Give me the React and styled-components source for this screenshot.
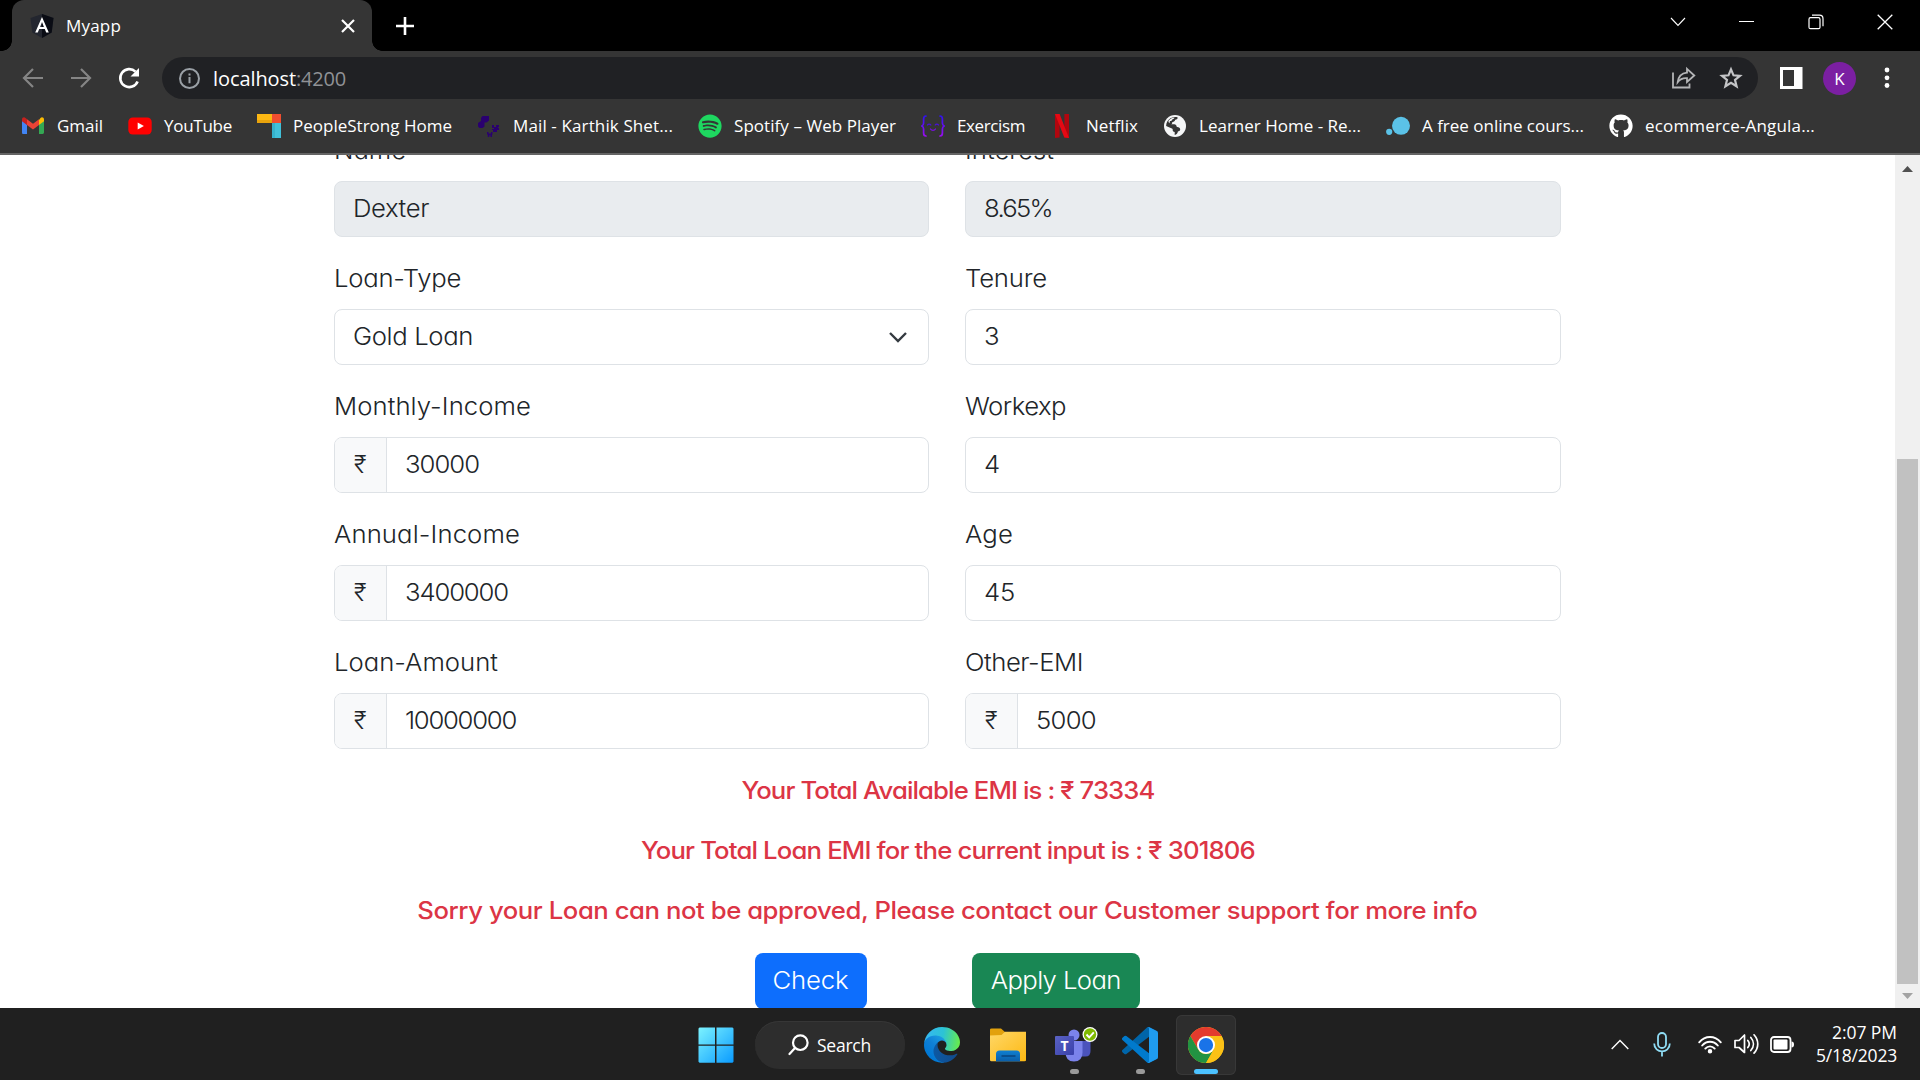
import React, { useLayoutEffect, useRef } from "react";
import styled, { createGlobalStyle } from "styled-components";
import { FaGithub, FaSpotify } from "react-icons/fa";

const GlobalStyle = createGlobalStyle`
  * { box-sizing: border-box; }
  html, body { margin: 0; padding: 0; background: #fff; overflow: hidden; }
  svg { display: block; flex: none; }
`;

const uiFont = `"Open Sans", "Noto Sans", sans-serif`;
const pageFont = `Inter, "Open Sans", "Noto Sans", sans-serif`;

const Desktop = styled.div`
  width: 1920px;
  height: 1080px;
  display: flex;
  flex-direction: column;
  overflow: hidden;
  font-family: ${uiFont};
`;

/* ---------- text tracked to a measure ---------- */

const Tracked = styled.span`
  display: inline-block;
  white-space: pre;
  transform: ${(p) => (p.$stretch === 1 ? "none" : `scaleX(${p.$stretch})`)};
  transform-origin: ${(p) => p.$origin} center;
`;

function Fit({ width, stretch = 1, origin = "left", children }) {
  const ref = useRef(null);
  useLayoutEffect(() => {
    const el = ref.current;
    el.style.letterSpacing = "0px";
    const natural = el.getBoundingClientRect().width;
    const count = el.textContent.length;
    el.style.letterSpacing = `${(width - natural) / stretch / count}px`;
  }, [width, stretch, children]);
  return <Tracked ref={ref} $stretch={stretch} $origin={origin}>{children}</Tracked>;
}

const WIDE = 1.07;

/* ---------- browser chrome ---------- */

const TabStrip = styled.header`
  height: 51px;
  flex: none;
  display: flex;
  background: #000;
  padding-left: 12px;
`;

const Tab = styled.div`
  position: relative;
  width: 360px;
  height: 51px;
  display: flex;
  align-items: center;
  padding: 0 17px 0 18px;
  background: #353535;
  border-radius: 12px 12px 0 0;
  color: #fff;
  font-size: 17px;
  &::before, &::after {
    content: "";
    position: absolute;
    bottom: 0;
    width: 10px;
    height: 10px;
  }
  &::before { left: -10px; background: radial-gradient(circle at 0 0, #000 9.5px, #353535 10px); }
  &::after { right: -10px; background: radial-gradient(circle at 100% 0, #000 9.5px, #353535 10px); }
`;

const TabTitle = styled.div`
  flex: 1;
  padding-left: 12px;
  line-height: 26px;
`;

const NewTab = styled.div`
  display: flex;
  align-items: center;
  margin-left: 24px;
`;

const WindowControls = styled.div`
  margin-left: auto;
  margin-right: 1px;
  display: flex;
  height: 43px;
`;

const WindowButton = styled.div`
  width: 69px;
  display: flex;
  align-items: center;
  justify-content: center;
`;

const Toolbar = styled.div`
  height: 54px;
  flex: none;
  display: flex;
  align-items: center;
  background: #353535;
  padding: 0 20px 0 21px;
`;

const NavGroup = styled.div`
  width: 141px;
  display: flex;
  gap: 24px;
`;

const AddressBar = styled.div`
  width: 1596px;
  height: 42px;
  display: flex;
  align-items: center;
  border-radius: 21px;
  background: #202124;
  padding: 0 15px 0 16px;
  font-size: 20px;
`;

const Url = styled.div`
  flex: 1;
  padding-left: 12px;
  line-height: 29px;
`;

const Host = styled.span`
  color: ${(p) => (p.$dim ? "#909296" : "#fff")};
`;

const AddressActions = styled.div`
  display: flex;
  gap: 23px;
`;

const ToolbarEnd = styled.div`
  flex: 1;
  display: flex;
  align-items: center;
  padding-left: 22px;
`;

const Avatar = styled.div`
  width: 33px;
  height: 33px;
  margin: 0 28px 0 20px;
  border-radius: 50%;
  background: #7b1fa2;
  color: #fff;
  font-size: 17px;
  line-height: 33px;
  text-align: center;
`;

const Bookmarks = styled.nav`
  height: 50px;
  flex: none;
  display: flex;
  align-items: center;
  gap: 25px;
  padding: 0 0 7px 21px;
  background: #353535;
  border-bottom: 2px solid #646464;
  color: #fff;
  font-size: 17px;
`;

const Bookmark = styled.div`
  width: ${(p) => p.$width}px;
  flex: none;
  display: flex;
  align-items: center;
  gap: 12px;
  line-height: 24px;
`;

/* ---------- page ---------- */

const Viewport = styled.main`
  height: 853px;
  flex: none;
  display: flex;
  overflow: hidden;
  background: #fff;
`;

const Page = styled.div`
  width: 1895px;
  height: 853px;
  overflow: hidden;
  font-family: ${pageFont};
  font-feature-settings: "cv11" 1;
  font-weight: 260;
  font-size: 24px;
  color: #212529;
`;

const LoanForm = styled.div`
  width: 1227px;
  margin: -23px 0 0 334px;
  display: grid;
  grid-template-columns: 595px 596px;
  column-gap: 36px;
  grid-auto-rows: 128px;
`;

const Field = styled.div`
  display: flex;
  flex-direction: column;
`;

const Label = styled.label`
  height: 37px;
  line-height: 38px;
  margin-bottom: 12px;
`;

const Control = styled.div`
  height: 56px;
  display: flex;
  align-items: stretch;
  overflow: hidden;
  border: 1px solid #dee2e6;
  border-radius: 8px;
  background: ${(p) => (p.$disabled ? "#e9ecef" : "#fff")};
  line-height: 54px;
`;

const Prefix = styled.div`
  width: 52px;
  padding-left: 19px;
  background: #f8f9fa;
  border-right: 1px solid #dee2e6;
`;

const Value = styled.div`
  flex: 1;
  padding-left: 18px;
`;

const Caret = styled.div`
  display: flex;
  align-items: center;
  padding-right: 20px;
`;

const Messages = styled.div`
  display: flex;
  flex-direction: column;
  align-items: center;
  padding-bottom: 1px;
  color: #dc3545;
  font-weight: 450;
`;

const Message = styled.p`
  margin: 0 0 23px;
  height: 37px;
  line-height: 38px;
`;

const Actions = styled.div`
  display: flex;
  justify-content: center;
  gap: 105px;
  font-weight: 300;
`;

const Button = styled.button`
  width: ${(p) => p.$width}px;
  height: 56px;
  padding: 0;
  border: 0;
  border-radius: 8px;
  background: ${(p) => p.$color};
  color: #fff;
  font: inherit;
  font-feature-settings: inherit;
  line-height: 54px;
`;

const Scrollbar = styled.div`
  width: 25px;
  display: flex;
  flex-direction: column;
  align-items: center;
  justify-content: space-between;
  background: #f0f0f0;
`;

const ScrollArrow = styled.div`
  height: 24px;
  display: flex;
  align-items: center;
  padding-top: ${(p) => (p.$top ? 3 : 0)}px;
`;

const ScrollThumb = styled.div`
  width: 21px;
  height: 525px;
  margin-top: auto;
  background: #c1c1c1;
`;

/* ---------- taskbar ---------- */

const Taskbar = styled.footer`
  height: 72px;
  flex: none;
  display: flex;
  background: #202020;
  color: #fff;
  padding-left: 683px;
`;

const Slot = styled.div`
  position: relative;
  width: 60px;
  height: 60px;
  margin: 7px 3px 0;
  display: flex;
  align-items: center;
  justify-content: center;
  border-radius: 6px;
  background: ${(p) => (p.$active ? "#2d2d2d" : "transparent")};
  box-shadow: ${(p) => (p.$active ? "inset 0 0 0 1px #383838" : "none")};
  &::after {
    content: "";
    position: absolute;
    bottom: 1px;
    width: ${(p) => (p.$active ? 24 : 9)}px;
    height: 5px;
    border-radius: 3px;
    background: ${(p) => (p.$active ? "#4cc2ff" : p.$open ? "#9a9a9a" : "transparent")};
  }
`;

const SearchPill = styled.div`
  width: 150px;
  height: 48px;
  margin: 13px 4px 0 6px;
  display: flex;
  align-items: center;
  padding: 0 0 0 33px;
  gap: 8px;
  border-radius: 24px;
  background: #2d2d2d;
  box-shadow: inset 0 1px 0 #363636;
  font-size: 17.5px;
  line-height: 24px;
`;

const Tray = styled.div`
  width: 309px;
  margin-left: auto;
  display: flex;
  align-items: center;
  padding: 0 23px 0 0;
`;

const TrayIcon = styled.div`
  margin-right: ${(p) => p.$after}px;
`;

const Clock = styled.div`
  flex: 1;
  display: flex;
  flex-direction: column;
  align-items: flex-end;
  font-size: 17.5px;
  line-height: 23px;
`;

/* ---------- icons ---------- */

const AngularIcon = () => (
  <svg width="24" height="24" viewBox="0 0 24 24">
    <path d="M12 0L.5 4l1.8 14.5L12 24l9.7-5.5L23.5 4z" fill="#23262f" />
    <path d="M12 0v24l9.7-5.5L23.5 4z" fill="#0a0c14" />
    <path d="M12 3L5.2 18.5h2.6l1.4-3.4h5.6l1.4 3.4h2.6zm0 5.1l1.9 4.9h-3.8z" fill="#fff" />
  </svg>
);

const GmailIcon = () => (
  <svg width="24" height="24" viewBox="0 0 24 24">
    <path d="M1 6.5v12.2c0 .8.6 1.4 1.4 1.4H6v-9.3L3.5 6z" fill="#4285f4" />
    <path d="M18 20h3.6c.8 0 1.4-.6 1.4-1.4V6.5L20.500 6 18 10.800z" fill="#34a853" />
    <path d="M18 6v4.900l5-3.700V5.500c0-2-2.200-2.800-3.500-1.500z" fill="#fbbc04" />
    <path d="M6 10.900V5.300l6 4.500 6-4.500v5.600l-6 4.500z" fill="#ea4335" />
    <path d="M1 5.500v1.700l5 3.700V5.300L4.500 4C3.200 2.700 1 3.500 1 5.500z" fill="#c5221f" />
  </svg>
);

const YouTubeIcon = () => (
  <svg width="24" height="24" viewBox="0 0 24 24">
    <rect x="0.300" y="3.500" width="23.400" height="17" rx="4.500" fill="#f00" />
    <path d="M9.700 8.500v7l6.200-3.500z" fill="#fff" />
  </svg>
);

const PeopleStrongIcon = () => (
  <svg width="24" height="24" viewBox="0 0 24 24">
    <path d="M0 0h15v9H0z" fill="#fdb813" />
    <path d="M0 6h15v3H0z" fill="#e9a30c" />
    <path d="M15 0h9v9h-9z" fill="#f04e30" />
    <path d="M15 9h9v15h-9z" fill="#41c0d9" />
    <path d="M15 9h3v15h-3z" fill="#35b2cc" />
  </svg>
);

const MailIcon = () => (
  <svg width="24" height="24" viewBox="0 0 24 24" fill="#2a0070">
    <path d="M5.500 2H12v4.500L9.500 8.500H7.500v4l-2 1.500H2.500L1 12.500V9l3-2V4z" />
    <path d="M15 11h2v2h2v-2h3v2h-1v1h1v2h-2v2h-4v-2h-1v-1h2v-1h-2z" />
    <path d="M10 18h1.500v1.500H14V18h1.500v2.500H15V23h-1.500v-1.800H12.300V23H10.800v-2.500H10z" />
  </svg>
);

const ExercismIcon = () => (
  <svg width="24" height="24" viewBox="0 0 24 24" fill="none" strokeLinecap="round" strokeWidth="1.700">
    <defs>
      <linearGradient id="ex" x1="0" y1="0" x2="0" y2="1">
        <stop offset="0" stopColor="#2f12f0" />
        <stop offset="1" stopColor="#9a0df0" />
      </linearGradient>
    </defs>
    <path d="M5 2C3 2 2.600 3 2.600 5v4c0 1.800-.6 2.500-1.800 3 1.200.5 1.800 1.200 1.800 3v4c0 2 .4 3 2.400 3" stroke="url(#ex)" />
    <path d="M19 2c2 0 2.400 1 2.400 3v4c0 1.800.6 2.500 1.800 3-1.200.5-1.800 1.200-1.800 3v4c0 2-.4 3-2.400 3" stroke="url(#ex)" />
    <path d="M6.500 11c.8-1.300 2.500-1.300 3.300 0M14.200 11c.8-1.300 2.500-1.300 3.300 0" stroke="#4a10d8" strokeWidth="1.300" />
    <path d="M9.500 15c1.200 1.900 3.800 1.900 5 0" stroke="#7a0fe0" strokeWidth="1.300" />
  </svg>
);

const NetflixIcon = () => (
  <svg width="24" height="24" viewBox="0 0 24 24">
    <path d="M5 0h4.600v23.600L5 24z" fill="#b1060f" />
    <path d="M14.400 0H19v24l-4.600-.5z" fill="#b1060f" />
    <path d="M5 0h4.600L19 24l-4.700-.6z" fill="#e50914" />
  </svg>
);

const GlobeIcon = () => (
  <svg width="24" height="24" viewBox="0 0 24 24">
    <circle cx="12" cy="12" r="11" fill="#f5f6f7" />
    <path
      d="M14.500 3.200c.6 1.600-.8 2.400-2.300 2.500-.5 1.900-1.900 2.200-3 2.300.3 1.300-.2 2-1.200 2.200l3.200.1c1.800.1 2.500 1.500 2.600 2.700 1.800-.2 3.500.8 3.400 2.600-.2 1.600-1.500 1.900-2.300 2-.3 1.700-1.200 3-3.200 3.500v-3c-1.500-.1-2.100-1-2-2.300.1-1-.4-1.400-1.400-1.600L3.100 12c0-3.500 2-6.400 4.700-7.900 1.900-1 4.500-1.500 6.700-.9z"
      fill="#353535"
    />
    <path d="M5.500 6.800c1.500-2 3.600-3 6-3.200-.2 1.200-1 1.500-2 1.600-.4 1.400-1.500 1.800-2.500 1.900-.3.900-.2 1.400-.6 2.200-.6-.8-1.200-1.500-.9-2.500z" fill="#f5f6f7" />
  </svg>
);

const DotsIcon = () => (
  <svg width="24" height="24" viewBox="0 0 24 24" fill="#5bc2e7">
    <circle cx="15" cy="11.800" r="9" />
    <circle cx="3.200" cy="17.800" r="3.100" />
  </svg>
);

const BackIcon = ({ flip }) => (
  <svg width="24" height="24" viewBox="0 0 24 24" fill="none" stroke="#858585" strokeWidth="2.200">
    <path d={flip ? "M2 12h18.500M12 3l9 9-9 9" : "M22 12H3.500M12 3l-9 9 9 9"} />
  </svg>
);

const ReloadIcon = () => (
  <svg width="24" height="24" viewBox="0 0 24 24">
    <path d="M20.600 15.500A9 9 0 1 1 18.500 5.600" fill="none" stroke="#fff" strokeWidth="2.600" />
    <path d="M22 2v8.500h-8.500z" fill="#fff" />
  </svg>
);

const InfoIcon = () => (
  <svg width="23" height="23" viewBox="0 0 24 24" fill="none" stroke="#9aa0a6" strokeWidth="2.100">
    <circle cx="12" cy="12" r="9.900" />
    <path d="M12 10.500v6.500M12 6.700v2.200" />
  </svg>
);

const ShareIcon = () => (
  <svg width="25" height="24" viewBox="0 0 25 24" fill="none" stroke="#b4b5b7" strokeWidth="1.800">
    <path d="M2 6.500V21.500h16.500v-4" />
    <path d="M16 2.800l7.300 6.700-7.300 6.500v-3.800c-4-.3-7 1-9.300 4 .6-5.200 3.800-8.900 9.300-9.500z" />
  </svg>
);

const StarIcon = () => (
  <svg width="24" height="24" viewBox="0 0 24 24" fill="none" stroke="#c4c5c7" strokeWidth="2.200">
    <path d="M12 3.300l2.500 6 6.500.5-5 4.200 1.600 6.300-5.600-3.400-5.600 3.400L8 14 3 9.800l6.500-.5z" />
  </svg>
);

const SidePanelIcon = () => (
  <svg width="23" height="22" viewBox="0 0 23 22">
    <path d="M0 0h22.500v22H0zM3 3v16h11V3z" fill="#fff" fillRule="evenodd" />
  </svg>
);

const MenuIcon = () => (
  <svg width="6" height="22" viewBox="0 0 6 22" fill="#fff">
    <circle cx="3" cy="3" r="2.400" />
    <circle cx="3" cy="10.800" r="2.400" />
    <circle cx="3" cy="18.500" r="2.400" />
  </svg>
);

const WindowsIcon = () => (
  <svg width="36" height="36" viewBox="0 0 36 36">
    <defs>
      <linearGradient id="win" x1="0" y1="0" x2="1" y2="1">
        <stop offset="0" stopColor="#7cf3ff" />
        <stop offset="1" stopColor="#0a9bff" />
      </linearGradient>
    </defs>
    <path d="M1.500 .5H17v17H.5v-16zM18.500 .5H34.500l1 1v16h-17zM.5 18.700H17v17H1.500l-1-1zM18.500 18.700h17v16l-1 1h-16z" fill="url(#win)" />
  </svg>
);

const SearchIcon = () => (
  <svg width="21" height="22" viewBox="0 0 21 22" fill="none" stroke="#fff" strokeWidth="2.200" strokeLinecap="round">
    <circle cx="12.300" cy="8.700" r="7.300" />
    <path d="M7 14L1.500 20" />
  </svg>
);

const EdgeIcon = () => (
  <svg width="36" height="36" viewBox="0 0 256 256">
    <defs>
      <linearGradient id="e1" x1="63" y1="177" x2="242" y2="177" gradientUnits="userSpaceOnUse">
        <stop offset="0" stopColor="#0c59a4" />
        <stop offset="1" stopColor="#114a8b" />
      </linearGradient>
      <linearGradient id="e2" x1="157" y1="95" x2="46" y2="215" gradientUnits="userSpaceOnUse">
        <stop offset="0" stopColor="#1b9de2" />
        <stop offset=".5" stopColor="#0f80d7" />
        <stop offset="1" stopColor="#0078d4" />
      </linearGradient>
      <linearGradient id="e3" x1="10" y1="70" x2="250" y2="110" gradientUnits="userSpaceOnUse">
        <stop offset="0" stopColor="#35b8f1" />
        <stop offset=".5" stopColor="#2cc3d5" />
        <stop offset="1" stopColor="#66eb4e" />
      </linearGradient>
    </defs>
    <path d="M231 190.500c-3.400 1.800-6.900 3.400-10.500 4.700a102 102 0 0 1-35.900 6.500c-47.300 0-88.500-32.500-88.500-74.300 0-11.400 6.500-21.900 16.500-27.300-42.800 1.800-53.800 46.400-53.800 72.500 0 74 68.100 81.400 82.800 81.400 7.900 0 19.800-2.300 27-4.600l1.300-.4a128 128 0 0 0 66.600-52.800 4 4 0 0 0-5.500-5.700z" fill="url(#e1)" />
    <path d="M105.700 241.400a79 79 0 0 1-22.700-21.300 80.700 80.700 0 0 1 29.500-120c3.200-1.500 8.500-4.100 15.600-4a32 32 0 0 1 25.700 13 32 32 0 0 1 6.300 18.700c0-.2 24.500-79.600-80-79.600-43.900 0-80 41.700-80 78.200 0 19.300 4 36.700 12 54a128 128 0 0 0 156.400 67 75 75 0 0 1-62.800-6z" fill="url(#e2)" />
    <path d="M152.300 148.900c-.9 1-3.400 2.500-3.400 5.600 0 2.600 1.700 5.200 4.800 7.300 14.300 10 41.400 8.600 41.500 8.600a59.600 59.600 0 0 0 30.300-8.300 61.400 61.400 0 0 0 30.400-52.900c.3-22.400-8-37.300-11.300-43.900C223.500 23.900 177.700 0 128 0A128 128 0 0 0 0 126.200c.5-36.500 36.800-66 80-66 3.500 0 23.500.3 42 10a73 73 0 0 1 30.900 29.400c6.100 10.600 7.200 24.100 7.200 29.500s-2.700 13.300-7.800 19.800z" fill="url(#e3)" />
  </svg>
);

const FolderIcon = () => (
  <svg width="36" height="34" viewBox="0 0 36 34">
    <defs>
      <linearGradient id="fo" x1="0" y1="0" x2="1" y2="1">
        <stop offset="0" stopColor="#ffd767" />
        <stop offset="1" stopColor="#fdb913" />
      </linearGradient>
      <linearGradient id="fb" x1="0" y1="0" x2="0" y2="1">
        <stop offset="0" stopColor="#0f80d2" />
        <stop offset="1" stopColor="#0b5ea8" />
      </linearGradient>
    </defs>
    <path d="M0 1.500Q0 .5 1.500 .5h9.500l4 3.500h4v6H0z" fill="#e2a10d" />
    <path d="M0 7.500L11.500 7l3.500-3.300h21v28.500q0 1-1.500 1h-33Q0 33.200 0 32z" fill="url(#fo)" />
    <path d="M6 33.500V26q0-3.500 3.500-3.500h17Q30 22.500 30 26v7.500z" fill="url(#fb)" />
    <path d="M11.500 28h14" stroke="#08457e" strokeWidth="1.500" />
  </svg>
);

const TeamsMark = styled.div`
  position: relative;
  width: 44px;
  height: 36px;
  margin-left: 6px;
`;

const TeamsLetter = styled.span`
  position: absolute;
  left: 0;
  top: 9px;
  width: 19px;
  height: 19px;
  border-radius: 1px;
  background: linear-gradient(135deg, #5a62c3, #3940ab);
  color: #fff;
  font: 700 14px/19px "Open Sans", sans-serif;
  text-align: center;
`;

const TeamsIcon = () => (
  <TeamsMark>
    <svg width="44" height="36" viewBox="0 0 44 36">
      <path d="M26 14h9.500v10q0 5.500-5 5.500H26z" fill="#4b53bc" />
      <circle cx="19" cy="8" r="5.500" fill="#7b83eb" />
      <path d="M11 14h16.500v11.500q0 9-8.500 9t-8.500-9z" fill="#7b83eb" />
      <circle cx="35" cy="7.500" r="7.500" fill="#fff" />
      <circle cx="35" cy="7.500" r="6.200" fill="#7fba00" />
      <path d="M31.500 7.500l2.700 2.800 4.600-5" fill="none" stroke="#fff" strokeWidth="1.900" />
    </svg>
    <TeamsLetter>T</TeamsLetter>
  </TeamsMark>
);

const VSCodeIcon = () => (
  <svg width="36" height="36" viewBox="0 0 100 100">
    <path d="M96.500 10.800L75.900.9a6.200 6.200 0 0 0-7.100 1.200L1.300 63.600a4.200 4.200 0 0 0 0 6.200l5.500 5a4.200 4.200 0 0 0 5.300.2L93.400 13.400A4.100 4.100 0 0 1 100 16.700v-.3a6.200 6.200 0 0 0-3.500-5.600z" fill="#0065a9" />
    <path d="M96.500 89.200l-20.600 9.900a6.200 6.200 0 0 1-7.100-1.200L1.300 36.400a4.200 4.200 0 0 1 0-6.200l5.500-5a4.200 4.200 0 0 1 5.300-.2l81.300 61.600a4.100 4.100 0 0 0 6.600-3.300v.3a6.200 6.200 0 0 1-3.500 5.600z" fill="#007acc" />
    <path d="M75.900 99.100a6.200 6.200 0 0 1-7.100-1.200c2.300 2.300 6.200.7 6.200-2.600V4.700c0-3.300-3.900-4.900-6.200-2.600a6.200 6.200 0 0 1 7.100-1.200l20.600 9.900a6.300 6.300 0 0 1 3.500 5.600v67.200c0 2.400-1.400 4.600-3.500 5.600z" fill="#1f9cf0" />
  </svg>
);

const ChromeIcon = () => (
  <svg width="36" height="36" viewBox="0 0 48 48">
    <circle cx="24" cy="24" r="24" fill="#fbc116" />
    <path d="M24 24L13.600 30 3.200 12A24 24 0 0 1 44.800 12H24z" fill="#e33b2e" />
    <path d="M3.200 12l10.400 18A12 12 0 0 0 34.400 30L24 48A24 24 0 0 1 3.200 12z" fill="#229342" />
    <path d="M44.800 12A24 24 0 0 1 24 48l10.400-18A12 12 0 0 0 24 12z" fill="#fbc116" />
    <circle cx="24" cy="24" r="12" fill="#fff" />
    <circle cx="24" cy="24" r="9.500" fill="#1a73e8" />
  </svg>
);

const MicIcon = () => (
  <svg width="18" height="25" viewBox="0 0 18 25" fill="none" stroke="#8fdcf4" strokeWidth="1.800">
    <rect x="5" y="1" width="8" height="15" rx="4" />
    <path d="M1.200 11.500C1.200 22 16.800 22 16.800 11.500M9 19.500V24.500" />
  </svg>
);

const WifiIcon = () => (
  <svg width="24" height="19" viewBox="0 0 24 19" fill="none" stroke="#fff" strokeWidth="1.900" strokeLinecap="round">
    <path d="M1.200 7.300C7.200.2 16.800.2 22.800 7.300M4.200 10.500c4.300-5 11.300-5 15.600 0M7.300 13.600c2.600-3 6.800-3 9.400 0" />
    <circle cx="12" cy="16.200" r="1.300" fill="#fff" />
  </svg>
);

const SpeakerIcon = () => (
  <svg width="25" height="22" viewBox="0 0 25 22" fill="none" stroke="#fff" strokeWidth="1.700" strokeLinecap="round">
    <path d="M1 7.500h4L10.500 2v17.500L5 14.500H1z" strokeLinejoin="round" />
    <path d="M13.800 7.500c1.700 2 1.700 5 0 7M16.800 4.500c3.500 4 3.500 9 0 13M20 1.800c5 5.500 5 13 0 18.400" />
  </svg>
);

const BatteryIcon = () => (
  <svg width="25" height="17" viewBox="0 0 25 17">
    <rect x="1" y="1" width="19.500" height="15" rx="3" fill="none" stroke="#fff" strokeWidth="1.800" />
    <rect x="3.500" y="3.500" width="14" height="10" rx="1" fill="#fff" />
    <path d="M21.500 5.500q2.500 0 2.500 3t-2.500 3z" fill="#fff" />
  </svg>
);

const Line = ({ w, h, d, width = 2, color = "#fff" }) => (
  <svg width={w} height={h} viewBox={`0 0 ${w} ${h}`} fill="none" stroke={color} strokeWidth={width}>
    <path d={d} />
  </svg>
);

/* ---------- data ---------- */

const bookmarks = [
  { text: "Gmail", width: 82, icon: <GmailIcon /> },
  { text: "YouTube", width: 104, icon: <YouTubeIcon /> },
  { text: "PeopleStrong Home", width: 195, icon: <PeopleStrongIcon /> },
  { text: "Mail - Karthik Shet...", width: 196, icon: <MailIcon /> },
  { text: "Spotify – Web Player", width: 198, icon: <FaSpotify size={24} color="#1ed760" /> },
  { text: "Exercism", width: 104, icon: <ExercismIcon /> },
  { text: "Netflix", width: 88, icon: <NetflixIcon /> },
  { text: "Learner Home - Re...", width: 198, icon: <GlobeIcon /> },
  { text: "A free online cours...", width: 198, icon: <DotsIcon /> },
  { text: "ecommerce-Angula...", width: 206, icon: <FaGithub size={24} color="#fff" /> },
];

const fields = [
  { label: "Name", lw: 72, value: "Dexter", vw: 76, disabled: true },
  { label: "Interest", lw: 89, value: "8.65%", vw: 68, disabled: true },
  { label: "Loan-Type", lw: 127, value: "Gold Loan", vw: 120, select: true },
  { label: "Tenure", lw: 82, value: "3", vw: 16 },
  { label: "Monthly-Income", lw: 197, value: "30000", vw: 74, rupee: true },
  { label: "Workexp", lw: 101, value: "4", vw: 16 },
  { label: "Annual-Income", lw: 186, value: "3400000", vw: 103, rupee: true },
  { label: "Age", lw: 48, value: "45", vw: 31 },
  { label: "Loan-Amount", lw: 164, value: "10000000", vw: 111, rupee: true },
  { label: "Other-EMI", lw: 118, value: "5000", vw: 60, rupee: true },
];

const messages = [
  { text: "Your Total Available EMI is : ₹ 73334", width: 413 },
  { text: "Your Total Loan EMI for the current input is : ₹ 301806", width: 614 },
  { text: "Sorry your Loan can not be approved, Please contact our Customer support for more info", width: 1060 },
];

export default function App() {
  return (
    <Desktop>
      <GlobalStyle />
      <TabStrip>
        <Tab>
          <AngularIcon />
          <TabTitle><Fit width={55}>Myapp</Fit></TabTitle>
          <Line w={14} h={14} d="M1 1l12 12M13 1L1 13" width={2.2} />
        </Tab>
        <NewTab><Line w={18} h={18} d="M9 0v18M0 9h18" width={2.6} /></NewTab>
        <WindowControls>
          <WindowButton><Line w={16} h={10} d="M1 1l7 7.500L15 1" width={1.1} /></WindowButton>
          <WindowButton><Line w={15} h={1} d="M0 .5h15" width={1} /></WindowButton>
          <WindowButton>
            <Line w={16} h={16} d="M2.500 3.700h8q1.500 0 1.500 1.500v8q0 1.500-1.500 1.500h-8q-1.500 0-1.500-1.500v-8q0-1.500 1.500-1.500zM4 1.200h7.500q3.500 0 3.500 3.500v7.500" width={1.2} />
          </WindowButton>
          <WindowButton><Line w={16} h={16} d="M.7 .7l14.600 14.600M15.300 .7L.7 15.300" width={1.3} /></WindowButton>
        </WindowControls>
      </TabStrip>

      <Toolbar>
        <NavGroup>
          <BackIcon />
          <BackIcon flip />
          <ReloadIcon />
        </NavGroup>
        <AddressBar>
          <InfoIcon />
          <Url>
            <Host><Fit width={83}>localhost</Fit></Host>
            <Host $dim><Fit width={50}>:4200</Fit></Host>
          </Url>
          <AddressActions>
            <ShareIcon />
            <StarIcon />
          </AddressActions>
        </AddressBar>
        <ToolbarEnd>
          <SidePanelIcon />
          <Avatar>K</Avatar>
          <MenuIcon />
        </ToolbarEnd>
      </Toolbar>

      <Bookmarks>
        {bookmarks.map((b) => (
          <Bookmark key={b.text} $width={b.width}>
            {b.icon}
            <Fit width={b.width - 36}>{b.text}</Fit>
          </Bookmark>
        ))}
      </Bookmarks>

      <Viewport>
        <Page>
          <LoanForm>
            {fields.map((f) => (
              <Field key={f.label}>
                <Label><Fit width={f.lw} stretch={WIDE}>{f.label}</Fit></Label>
                <Control $disabled={f.disabled}>
                  {f.rupee && <Prefix>₹</Prefix>}
                  <Value><Fit width={f.vw} stretch={WIDE}>{f.value}</Fit></Value>
                  {f.select && (
                    <Caret><Line w={20} h={12} d="M2 2l8 8 8-8" width={2.4} color="#343a40" /></Caret>
                  )}
                </Control>
              </Field>
            ))}
          </LoanForm>
          <Messages>
            {messages.map((m) => (
              <Message key={m.text}>
                <Fit width={m.width} stretch={WIDE} origin="center">{m.text}</Fit>
              </Message>
            ))}
          </Messages>
          <Actions>
            <Button $width={112} $color="#0d6efd">
              <Fit width={76} stretch={WIDE} origin="center">Check</Fit>
            </Button>
            <Button $width={168} $color="#198754">
              <Fit width={130} stretch={WIDE} origin="center">Apply Loan</Fit>
            </Button>
          </Actions>
        </Page>
        <Scrollbar>
          <ScrollArrow $top>
            <svg width="11" height="6" viewBox="0 0 11 6"><path d="M0 6L5.500 0 11 6z" fill="#505050" /></svg>
          </ScrollArrow>
          <ScrollThumb />
          <ScrollArrow>
            <svg width="11" height="6" viewBox="0 0 11 6"><path d="M0 0l5.500 6L11 0z" fill="#a3a3a3" /></svg>
          </ScrollArrow>
        </Scrollbar>
      </Viewport>

      <Taskbar>
        <Slot><WindowsIcon /></Slot>
        <SearchPill><SearchIcon /><Fit width={54}>Search</Fit></SearchPill>
        <Slot><EdgeIcon /></Slot>
        <Slot><FolderIcon /></Slot>
        <Slot $open><TeamsIcon /></Slot>
        <Slot $open><VSCodeIcon /></Slot>
        <Slot $active><ChromeIcon /></Slot>
        <Tray>
          <TrayIcon $after={24}><Line w={18} h={11} d="M.7 10L9 1.500l8.300 8.500" width={1.4} /></TrayIcon>
          <TrayIcon $after={27}><MicIcon /></TrayIcon>
          <TrayIcon $after={12}><WifiIcon /></TrayIcon>
          <TrayIcon $after={11}><SpeakerIcon /></TrayIcon>
          <TrayIcon $after={0}><BatteryIcon /></TrayIcon>
          <Clock>
            <Fit width={65}>2:07 PM</Fit>
            <Fit width={81}>5/18/2023</Fit>
          </Clock>
        </Tray>
      </Taskbar>
    </Desktop>
  );
}
